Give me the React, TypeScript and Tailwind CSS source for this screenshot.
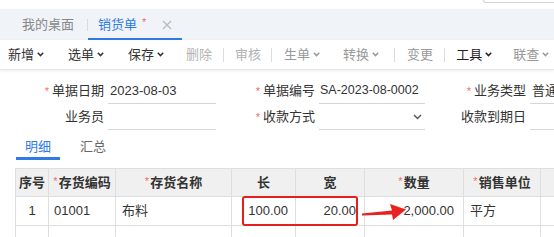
import React from "react";

const FONT = { fontFamily: '"Liberation Sans", "Noto Sans CJK SC", sans-serif' };

function Chev({ color = "#333" }: { color?: string }) {
  return (
    <svg width="7" height="5" viewBox="0 0 7 5" className="ml-[3px] shrink-0">
      <path d="M0.8 0.8 L3.5 3.6 L6.2 0.8" fill="none" stroke={color} strokeWidth="1.5" />
    </svg>
  );
}

function Sep({ ml }: { ml: string }) {
  return <div className={`${ml} w-px h-[14px] bg-[#dcdcdc] shrink-0`} />;
}

function Star() {
  return <span className="text-[#f26b6b] mr-[3px] text-[11px]">*</span>;
}

export default function App() {
  const cols = [33, 67, 116, 64, 69, 99, 77, 80];
  const header: { t: string; star?: boolean }[] = [
    { t: "序号" },
    { t: "存货编码", star: true },
    { t: "存货名称", star: true },
    { t: "长" },
    { t: "宽" },
    { t: "数量", star: true },
    { t: "销售单位", star: true },
    { t: "" },
  ];
  const item = "shrink-0 flex items-center whitespace-nowrap";
  return (
    <div className="w-[554px] h-[237px] overflow-hidden bg-white text-[13px] text-[#333] whitespace-nowrap" style={FONT}>
      {/* top strip */}
      <div className="h-[9px] flex justify-end">
        <div className="w-[71px] h-[3px] border-l border-b border-[#d4d4d4] rounded-bl-[3px]" />
      </div>
      {/* tab bar */}
      <div className="h-[31px] bg-[#f0f3f8] flex items-stretch">
        <div className="flex items-center pl-[22px] pr-[13px] text-[#888]">我的桌面</div>
        <div className="flex items-center">
          <div className="w-px h-[12px] bg-[#d8dce2]" />
        </div>
        <div className="flex items-center pl-[10px] pr-[10px] border-b-2 border-[#2f7ae5] pt-[2px]">
          <span className="text-[#2f7ae5]">销货单</span>
          <span className="text-[#f26b6b] ml-[5px] text-[11px] -mt-[4px]">*</span>
          <svg width="10" height="10" viewBox="0 0 10 10" className="ml-[16px]">
            <path d="M1 1 L9 9 M9 1 L1 9" stroke="#b8bcc4" strokeWidth="1.3" />
          </svg>
        </div>
      </div>
      {/* toolbar */}
      <div className="h-[30px] flex items-center overflow-hidden border-b border-[#e6e6e6] shadow-[0_1px_3px_rgba(0,0,0,0.08)]">
        <div className={`ml-[8px] ${item}`}>新增<Chev /></div>
        <div className={`ml-[24px] ${item}`}>选单<Chev /></div>
        <div className={`ml-[24px] ${item}`}>保存<Chev /></div>
        <div className={`ml-[22px] ${item} text-[#b4b4b4]`}>删除</div>
        <Sep ml="ml-[11px]" />
        <div className={`ml-[11px] ${item} text-[#b4b4b4]`}>审核</div>
        <Sep ml="ml-[10px]" />
        <div className={`ml-[12px] ${item} text-[#999]`}>生单<Chev color="#999" /></div>
        <div className={`ml-[23px] ${item} text-[#999]`}>转换<Chev color="#999" /></div>
        <Sep ml="ml-[15px]" />
        <div className={`ml-[12px] ${item} text-[#999]`}>变更</div>
        <Sep ml="ml-[11px]" />
        <div className={`ml-[11px] ${item} text-[#222]`}>工具<Chev color="#222" /></div>
        <div className={`ml-[21px] ${item} text-[#999]`}>联查<Chev color="#999" /></div>
      </div>
      {/* form */}
      <div className="pt-[8px]">
        <div className="flex h-[26px]">
          <div className="w-[104px] shrink-0 flex items-center justify-end"><Star />单据日期</div>
          <div className="ml-[4px] w-[108px] shrink-0 border-b border-[#d6d6d6] flex items-center pl-[2px]">2023-08-03</div>
          <div className="w-[99px] shrink-0 flex items-center justify-end"><Star />单据编号</div>
          <div className="ml-[4px] w-[106px] shrink-0 border-b border-[#d6d6d6] flex items-center pl-[1px] text-[12.5px]">SA-2023-08-0002</div>
          <div className="w-[101px] shrink-0 flex items-center justify-end"><Star />业务类型</div>
          <div className="ml-[4px] w-[40px] shrink-0 border-b border-[#d6d6d6] flex items-center pl-[2px]">普通</div>
        </div>
        <div className="flex h-[26px]">
          <div className="w-[104px] shrink-0 flex items-center justify-end">业务员</div>
          <div className="ml-[4px] w-[108px] shrink-0 border-b border-[#d6d6d6]" />
          <div className="w-[99px] shrink-0 flex items-center justify-end"><Star />收款方式</div>
          <div className="ml-[4px] w-[106px] shrink-0 border-b border-[#d6d6d6] flex items-center justify-end pr-[3px]">
            <svg width="9" height="6" viewBox="0 0 9 6">
              <path d="M1 1 L4.5 4.5 L8 1" fill="none" stroke="#555" strokeWidth="1.4" />
            </svg>
          </div>
          <div className="w-[101px] shrink-0 flex items-center justify-end">收款到期日</div>
          <div className="ml-[4px] w-[40px] shrink-0 border-b border-[#d6d6d6]" />
        </div>
      </div>
      {/* sub tabs */}
      <div className="flex h-[30px] pl-[16px]">
        <div className="px-[9px] pt-[6px] flex items-center border-b-[3px] border-[#2f7ae5] text-[#2f7ae5]">明细</div>
        <div className="ml-[11px] px-[9px] pt-[6px] flex items-center border-b-[3px] border-transparent text-[#666]">汇总</div>
      </div>
      {/* table */}
      <div className="mt-[8px] pl-[15px] relative">
        <div className="flex h-[28px] bg-[#f0f0f0] border-t border-[#dedede]">
          {header.map((h, i) => (
            <div
              key={i}
              style={{ width: cols[i] }}
              className="shrink-0 flex items-center justify-center font-bold text-[#333] border-l border-[#dedede]"
            >
              {h.star && <span className="text-[#f26b6b] font-normal text-[11px] mr-[1px] -mt-[3px]">*</span>}
              {h.t}
            </div>
          ))}
        </div>
        <div className="flex h-[29px] border-t border-[#dedede]">
          <div style={{ width: cols[0] }} className="shrink-0 border-l border-[#dedede] flex items-center justify-center">1</div>
          <div style={{ width: cols[1] }} className="shrink-0 border-l border-[#dedede] flex items-center pl-[5px]">01001</div>
          <div style={{ width: cols[2] }} className="shrink-0 border-l border-[#dedede] flex items-center pl-[6px]">布料</div>
          <div style={{ width: cols[3] }} className="shrink-0 border-l border-[#dedede] flex items-center justify-end pr-[7px]">100.00</div>
          <div style={{ width: cols[4] }} className="shrink-0 border-l border-[#dedede] flex items-center justify-end pr-[8px]">20.00</div>
          <div style={{ width: cols[5] }} className="shrink-0 border-l border-[#dedede] flex items-center justify-end pr-[9px]">2,000.00</div>
          <div style={{ width: cols[6] }} className="shrink-0 border-l border-[#dedede] flex items-center pl-[6px]">平方</div>
          <div style={{ width: cols[7] }} className="shrink-0 border-l border-[#dedede]" />
        </div>
        <div className="flex h-[29px] border-t border-[#dedede]">
          {cols.map((w, i) => (
            <div key={i} style={{ width: w }} className="shrink-0 border-l border-[#dedede]" />
          ))}
        </div>
        {/* red highlight box */}
        <div className="absolute left-[242px] top-[28px] w-[116px] h-[30px] border-2 border-[#e3201b] rounded-[3px]" />
        {/* arrow */}
        <svg className="absolute left-[360px] top-[32px]" width="48" height="22" viewBox="0 0 48 22">
          <polygon points="2,13.5 32,10.5 30,4 46,9.5 33,20 32,14.5 2,15.5" fill="#e8231f" />
        </svg>
      </div>
    </div>
  );
}
